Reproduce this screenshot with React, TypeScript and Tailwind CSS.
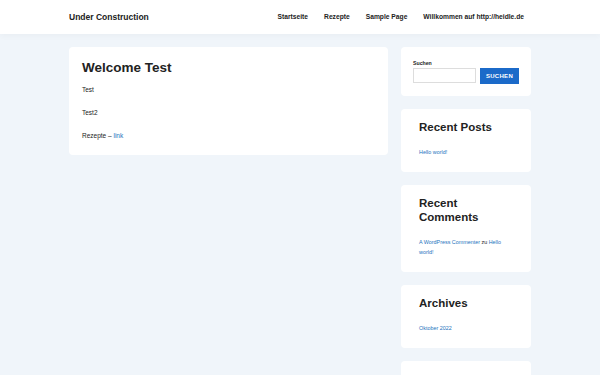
import React from 'react';

const NAV = ['Startseite', 'Rezepte', 'Sample Page', 'Willkommen auf http://heidle.de'];

function Widget({ title, children }: { title: string; children: React.ReactNode }) {
  return (
    <section className="rounded-[4px] bg-white px-[18px] pt-[10.5px] pb-[15.5px]">
      <h2 className="text-[11.5px] font-bold leading-[14px] text-[#222]">{title}</h2>
      <div className="mt-[13px] text-[5.4px] leading-[10px] text-[#1e73be]">{children}</div>
    </section>
  );
}

export default function App() {
  return (
    <div className="h-[375px] overflow-hidden bg-[#f0f5fa] font-['Liberation_Sans',Arial,sans-serif] text-[#222]">
      <header className="flex h-[34px] items-center justify-between bg-white pl-[69px] pr-[76px] shadow-[0_2px_6px_rgba(0,0,0,0.03)]">
        <div className="text-[8.5px] font-bold">Under Construction</div>
        <nav className="flex gap-[16px] text-[6.7px] font-bold">
          {NAV.map((n) => (
            <a key={n}>{n}</a>
          ))}
        </nav>
      </header>

      <div className="flex items-start gap-[13px] px-[69px] pt-[13px]">
        <main className="w-[319px] rounded-[4px] bg-white px-[13px] pt-[13px] pb-[15px]">
          <h1 className="text-[13.5px] font-bold leading-[16px]">Welcome Test</h1>
          <div className="mt-[10px] space-y-[15px] text-[6.5px] leading-[8px]">
            <p>Test</p>
            <p>Test2</p>
            <p>
              Rezepte – <a className="text-[#1e73be]">link</a>
            </p>
          </div>
        </main>

        <aside className="flex w-[130px] flex-col gap-[13px]">
          <section className="rounded-[4px] bg-white px-[12px] pt-[12px] pb-[12px]">
            <label className="block text-[5.2px] font-bold leading-[8px]">Suchen</label>
            <div className="mt-[1px] flex gap-[4px]">
              <input className="h-[15px] w-[63px] border border-[#ddd] bg-white" />
              <button className="h-[16px] w-[39px] bg-[#1b6ac9] text-[6px] font-bold tracking-[0.3px] text-white">SUCHEN</button>
            </div>
          </section>
          <Widget title="Recent Posts">
            <a>Hello world!</a>
          </Widget>
          <Widget title="Recent Comments">
            <a>A WordPress Commenter</a> <span className="text-[#222]">zu</span> <a>Hello world!</a>
          </Widget>
          <Widget title="Archives">
            <a>Oktober 2022</a>
          </Widget>
          <Widget title="Categories">
            <a>Uncategorized</a>
          </Widget>
        </aside>
      </div>
    </div>
  );
}
